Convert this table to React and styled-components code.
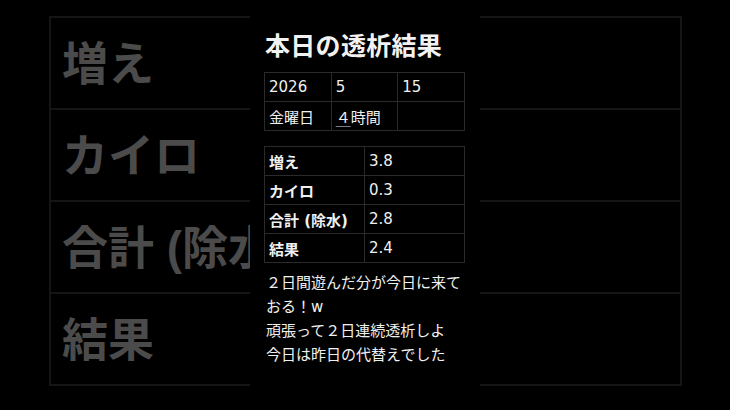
import React from "react";
import styled, { createGlobalStyle } from "styled-components";

const FONT = `"DejaVu Sans", "Noto Sans CJK JP", sans-serif`;

const GlobalStyle = createGlobalStyle`
  html, body {
    margin: 0;
    padding: 0;
    background: #000;
  }
  body {
    font-family: ${FONT};
  }
`;

const Stage = styled.div`
  width: 730px;
  height: 410px;
  display: grid;
  overflow: hidden;
  background: #000;
`;

const Backdrop = styled.div`
  grid-area: 1 / 1;
  padding: 16px 0 0 49px;
`;

const BigTable = styled.div`
  width: 633px;
  display: grid;
  grid-template-columns: 199px 1fr;
  grid-auto-rows: 90px;
  gap: 2px;
  border: 2px solid #151515;
  background: #151515;
  box-sizing: border-box;
`;

const BigCell = styled.div`
  background: #000;
  color: #4b4b4b;
  font-size: 46px;
  font-weight: 700;
  display: flex;
  align-items: center;
  padding-left: 11px;
  padding-bottom: 6px;
  white-space: nowrap;
  overflow: hidden;
  font-family: "Liberation Sans", "Noto Sans CJK JP", sans-serif;
`;

const Panel = styled.div`
  grid-area: 1 / 1;
  justify-self: center;
  width: 230px;
  height: 410px;
  background: #000;
  box-sizing: border-box;
  padding: 32px 15px 0 14px;
  display: flex;
  flex-direction: column;
  color: #f1f1f1;
`;

const Title = styled.h1`
  margin: 0 0 0 1px;
  font-size: 25px;
  line-height: 30px;
  font-weight: 700;
  letter-spacing: 0.3px;
  color: #f2f2f2;
`;

const Grid = styled.div`
  display: grid;
  grid-template-columns: repeat(${(p) => p.$cols}, 1fr);
  gap: 1px;
  border: 1px solid #2a2a2a;
  background: #2a2a2a;
  width: 201px;
  box-sizing: border-box;
  margin-top: ${(p) => p.$top}px;
`;

const Cell = styled.div`
  background: #000;
  height: 28px;
  display: flex;
  align-items: center;
  padding-left: 4px;
  font-size: 15px;
  font-weight: ${(p) => (p.$bold ? 700 : 400)};
  color: #f0f0f0;
  white-space: nowrap;
`;

const Detected = styled.span`
  text-decoration: underline;
  text-decoration-color: #7b7f90;
  text-underline-offset: 3px;
`;

const Note = styled.div`
  margin-top: 8px;
  padding-left: 2px;
  font-size: 15px;
  line-height: 24px;
  color: #f0f0f0;
  width: 200px;
`;

const Line = styled.div`
  white-space: normal;
  word-break: break-all;
`;

const rows = [
  ["増え", "3.8"],
  ["カイロ", "0.3"],
  ["合計 (除水)", "2.8"],
  ["結果", "2.4"],
];

export default function App() {
  return (
    <>
      <GlobalStyle />
      <Stage>
        <Backdrop>
          <BigTable>
            {rows.map(([k]) => (
              <React.Fragment key={k}>
                <BigCell>{k}</BigCell>
                <BigCell />
              </React.Fragment>
            ))}
          </BigTable>
        </Backdrop>
        <Panel>
          <Title>本日の透析結果</Title>
          <Grid $cols={3} $top={10}>
            <Cell>2026</Cell>
            <Cell>5</Cell>
            <Cell>15</Cell>
            <Cell>金曜日</Cell>
            <Cell>
              <Detected>４</Detected>時間
            </Cell>
            <Cell />
          </Grid>
          <Grid $cols={2} $top={15}>
            {rows.map(([k, v]) => (
              <React.Fragment key={k}>
                <Cell $bold>{k}</Cell>
                <Cell>{v}</Cell>
              </React.Fragment>
            ))}
          </Grid>
          <Note>
            <Line>２日間遊んだ分が今日に来ておる！w</Line>
            <Line>頑張って２日連続透析しよ</Line>
            <Line>今日は昨日の代替えでした</Line>
          </Note>
        </Panel>
      </Stage>
    </>
  );
}
